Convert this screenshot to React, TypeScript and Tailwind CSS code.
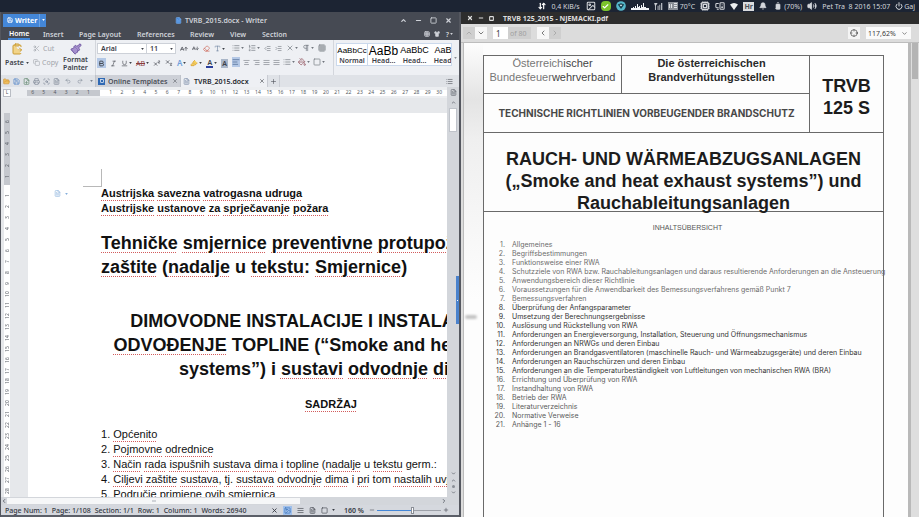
import type { ReactNode } from "react";
import {
  AArrowDown,
  AArrowUp,
  AlignCenter,
  AlignJustify,
  AlignLeft,
  AlignRight,
  ArrowDownUp,
  Battery,
  Bell,
  Bold,
  Check,
  ChevronDown,
  ChevronLeft,
  ChevronRight,
  ChevronUp,
  ClipboardPaste,
  Copy,
  Cpu,
  Crosshair,
  Eraser,
  FileDown,
  FileText,
  FolderOpen,
  Grid3x3,
  Highlighter,
  Image,
  IndentDecrease,
  IndentIncrease,
  Italic,
  List,
  ListOrdered,
  Minus,
  MonitorSpeaker,
  PaintBucket,
  Paintbrush,
  Pilcrow,
  Plus,
  Power,
  Printer,
  Redo2,
  Save,
  Scissors,
  ScanSearch,
  Shirt,
  Square,
  Subscript,
  Superscript,
  Type,
  Underline,
  Undo2,
  Volume2,
  X,
} from "lucide-react";

// text between braces gets the spell checker's red underline
function Checked({ text }: { text: string }) {
  return (
    <>
      {text.split(/[{}]/).map((part, i) =>
        i % 2 === 1 ? (
          <span key={i} className="underline decoration-[#d25c5c] decoration-dotted decoration-1 underline-offset-3">
            {part}
          </span>
        ) : (
          part
        )
      )}
    </>
  );
}

function Tool({ label, active, drop, children }: { label: string; active?: boolean; drop?: boolean; children: ReactNode }) {
  return (
    <button
      aria-label={label}
      className={`flex h-[10px] shrink-0 items-center justify-center gap-px ${active ? "bg-[#b4c8e6]" : ""}`}
    >
      {children}
      {drop && <Caret />}
    </button>
  );
}

function Caret() {
  return (
    <svg viewBox="0 0 4 3" className="h-[2px] w-[3px] shrink-0" aria-hidden="true">
      <path d="M0 0h4L2 3z" fill="currentColor" />
    </svg>
  );
}

function SystemBar() {
  return (
    <header className="flex h-3 shrink-0 items-center justify-end gap-[5px] bg-[#1c2433] pr-1 text-[7px] leading-none text-[#d3d6db]">
      <ArrowDownUp size={8} strokeWidth={3.5} className="text-white" />
      <span className="mr-px">0,4 KiB/s</span>
      <Image size={10} strokeWidth={2.5} />
      <span className="flex size-[10px] items-center justify-center rounded-[4px] bg-[#7cc42c] text-white">
        <Check size={7} strokeWidth={4} />
      </span>
      <svg viewBox="0 0 10 10" className="size-[10px]">
        <circle cx="5" cy="5" r="4.8" fill="#56b7cb" />
        <path d="M1.8 3.4 5 2.2l3.2 1.2L5 8z" fill="#123a4a" />
        <path d="M3.5 3.8h3L5 5.5z" fill="#e6f6fa" />
      </svg>
      <svg viewBox="0 0 18 8" className="h-2 w-[18px]">
        <path d="M0 8V6h2V5h1v1h1V4h1v2h1V2h1v3h1V4h1v2h1V3h1v2h1V1h1v4h2v1h3v2z" fill="#f1f3f5" />
      </svg>
      <svg viewBox="0 0 10 8" className="h-[7px] w-[9px]">
        <path d="M0 0h4L2 3v5H1V3zM4 3h1v5H4zM6 2h1v6H6zM8 0h1.3v8H8z" fill="#c8ccd2" />
      </svg>
      <span className="flex items-center gap-[2px]">
        <svg viewBox="0 0 10 8" className="h-2 w-[10px]">
          <path d="M0 0h10v8H0z" fill="#8b9097" />
          <path d="M1 2h1v4H1zM3 2h1v4H3zM6 1h3v1H6zM6 3h3v1H6zM6 5h3v1H6z" fill="#e2e4e7" />
        </svg>
        70°C
      </span>
      <Cpu size={10} strokeWidth={3} />
      <MonitorSpeaker size={10} strokeWidth={2.5} />
      <svg viewBox="0 0 8 7" className="h-[7px] w-2">
        <path d="M0 1.5Q4-1.5 8 1.5L4 7z" fill="#eceef0" />
      </svg>
      <span className="flex h-[9px] w-[11px] items-center justify-center bg-[#d9dbde] font-bold text-[#4b5058]">Hr</span>
      <Bell size={8} fill="currentColor" />
      <span className="ml-[2px] flex items-center gap-[2px]">
        <Battery size={8} className="-rotate-90" fill="currentColor" />
        (70%)
      </span>
      <Volume2 size={10} fill="currentColor" />
      <time>Pet Tra&nbsp; 8 2016 15:07</time>
      <span className="flex items-center gap-px">
        <Power size={8} strokeWidth={3} />
        Gaj
      </span>
    </header>
  );
}

const menu = [
  { name: "Home", width: "w-[35px]" },
  { name: "Insert", width: "w-9" },
  { name: "Page Layout", width: "w-[58px]" },
  { name: "References", width: "w-[53px]" },
  { name: "Review", width: "w-10" },
  { name: "View", width: "w-8" },
  { name: "Section", width: "w-8" },
];

function WriterHeader() {
  return (
    <div className="shrink-0 bg-[#464a53] text-[7px] leading-none font-semibold text-[#cfd2d8]">
      <div className="flex h-4 items-center pl-[2px]">
        <button className="flex h-[13px] w-[43px] items-center bg-[#4487d8] pl-1 font-bold text-white">
          <Save size={6} strokeWidth={3} />
          <span className="ml-[2px] flex-1 text-left">Writer</span>
          <span className="flex h-full w-[7px] items-center justify-center border-l border-[#6aa2e4]">
            <Caret />
          </span>
        </button>
        <h1 className="flex flex-1 items-center justify-center gap-[3px] pr-1">
          <FileText size={7} className="text-[#7fb2ee]" fill="#4487d8" />
          TVRB_2015.docx - Writer
        </h1>
        <div className="flex gap-2 pr-[7px]">
          <button aria-label="Roll up"><ChevronUp size={7} strokeWidth={4} /></button>
          <button aria-label="Minimise"><Minus size={7} strokeWidth={4} /></button>
          <button aria-label="Maximise"><Square size={7} strokeWidth={3} /></button>
          <button aria-label="Close"><X size={7} strokeWidth={4} /></button>
        </div>
      </div>
      <nav className="flex h-3 items-stretch pl-[7px]">
        {menu.map((m, i) => (
          <div key={m.name} className={`shrink-0 ${m.width}`}>
            <button
              className={`h-full whitespace-nowrap ${i === 0 ? "border-b-2 border-[#4487d8] px-px text-white" : ""}`}
            >
              {m.name}
            </button>
          </div>
        ))}
        <div className="ml-auto flex items-center gap-1 pr-[6px]">
          <Grid3x3 size={6} strokeWidth={3} />
          <Shirt size={6} fill="currentColor" />
          <button className="flex items-center gap-px pl-[2px]">? <Caret /></button>
        </div>
      </nav>
    </div>
  );
}

const styles = [
  { sample: "AaBbCc", name: "Normal", size: "text-[8px]" },
  { sample: "AaBb", name: "Head...", size: "text-[12px]" },
  { sample: "AaBbC", name: "Head...", size: "text-[9px]" },
  { sample: "AaBb", name: "Head...", size: "text-[9px]" },
];

function Ribbon() {
  return (
    <div className="flex h-[35px] shrink-0 overflow-hidden bg-[#eef0f4] pl-[3px] text-[7px] leading-none font-semibold text-[#3c4048]">
      <button className="flex w-[26px] flex-col items-center gap-1 pt-[3px]">
        <ClipboardPaste size={12} className="text-[#c99b34]" fill="#f2d489" />
        <span className="flex items-center gap-[2px]">Paste <Caret /></span>
      </button>
      <div className="flex w-[31px] flex-col gap-1 pt-[3px] pl-[3px] font-normal text-[#a0a4aa]">
        <button className="flex h-[10px] items-center gap-[3px]"><Scissors size={7} /> Cut</button>
        <button className="flex h-[10px] items-center gap-[2px]"><Copy size={7} /> Copy</button>
      </div>
      <button className="flex w-[29px] flex-col items-center gap-px pt-[3px]">
        <Paintbrush size={12} className="text-[#6d55a0]" fill="#a58fce" />
        <span className="leading-[8px]">Format Painter</span>
      </button>
      <div className="ml-[5px] flex w-[136px] shrink-0 flex-col gap-1 border-l border-[#d3d6dc] pt-[3px] pl-px">
        <div className="flex items-center gap-1">
          <div className="flex h-[11px] w-[79px] border border-[#cdd1d8] bg-white">
            <label className="flex w-[49px] items-center border-r border-[#cdd1d8] pr-[2px]">
              <select aria-label="Font name" className="w-full appearance-none pl-[3px] font-semibold outline-none">
                <option>Arial</option>
              </select>
              <Caret />
            </label>
            <label className="flex flex-1 items-center pr-[2px]">
              <select aria-label="Font size" className="w-full appearance-none pl-[3px] font-semibold outline-none">
                <option>11</option>
              </select>
              <Caret />
            </label>
          </div>
          <Tool label="Grow font"><AArrowUp size={8} /></Tool>
          <Tool label="Shrink font"><AArrowDown size={7} /></Tool>
          <Tool label="Clear formatting"><Eraser size={7} className="text-[#c8503c]" /></Tool>
          <Tool label="Change case" drop><Type size={7} className="text-[#6a7f9c]" /></Tool>
        </div>
        <div className="flex items-center gap-1">
          <Tool label="Bold" active><Bold size={9} strokeWidth={3} className="px-px" /></Tool>
          <Tool label="Italic"><Italic size={7} /></Tool>
          <Tool label="Underline" drop><Underline size={7} /></Tool>
          <Tool label="Strikethrough" drop><s className="font-normal text-[#8a3c3c]">AB</s></Tool>
          <Tool label="Superscript"><Superscript size={8} /></Tool>
          <Tool label="Subscript"><Subscript size={8} /></Tool>
          <Tool label="Text effects" drop><span className="text-[8px] text-[#6d9edb]">A</span></Tool>
          <Tool label="Highlight" drop><Highlighter size={8} className="text-[#d69a28]" fill="#f3cc5a" /></Tool>
          <Tool label="Font colour" drop><span className="border-b-2 border-[#2a3f9c] px-px">A</span></Tool>
          <Tool label="Shading"><span className="bg-[#a9b6c8] p-px">A</span></Tool>
        </div>
      </div>
      <div className="flex w-[103px] shrink-0 flex-col gap-1 border-r border-[#d3d6dc] pt-[3px] pl-px text-[#70757d]">
        <div className="flex items-center gap-1">
          <Tool label="Bullets" drop><List size={8} /></Tool>
          <Tool label="Numbering" drop><ListOrdered size={8} /></Tool>
          <Tool label="Decrease indent"><IndentDecrease size={7} /></Tool>
          <Tool label="Increase indent"><IndentIncrease size={7} /></Tool>
          <Tool label="Character scale" drop><X size={8} /></Tool>
          <Tool label="Paragraph marks" drop><Pilcrow size={8} /></Tool>
          <Tool label="Grid"><Grid3x3 size={8} /></Tool>
        </div>
        <div className="flex items-center gap-[3px]">
          <Tool label="Align left" active><AlignLeft size={8} className="text-[#46628c]" /></Tool>
          <Tool label="Centre"><AlignCenter size={7} /></Tool>
          <Tool label="Align right"><AlignRight size={7} /></Tool>
          <Tool label="Justify"><AlignJustify size={7} /></Tool>
          <Tool label="Distribute"><AlignJustify size={7} /></Tool>
          <Tool label="Line spacing" drop><List size={8} /></Tool>
          <Tool label="Fill" drop><PaintBucket size={8} className="text-[#8a4450]" /></Tool>
          <Tool label="Borders" drop><Square size={8} /></Tool>
        </div>
      </div>
      <div className="mt-[3px] ml-[2px] flex h-[23px] min-w-0 flex-1 overflow-hidden border border-[#cbd9ec] bg-white">
        {styles.map((s, i) => (
          <button
            key={i}
            className={`flex w-[31px] shrink-0 flex-col items-center justify-end overflow-hidden pb-px ${i === 0 ? "border-r border-[#cbd9ec]" : ""}`}
          >
            <span className={`flex h-[13px] items-center font-['Liberation_Sans',sans-serif] font-normal text-black ${s.size}`}>
              {s.sample}
            </span>
            {s.name}
          </button>
        ))}
      </div>
      <div className="flex w-[7px] items-center justify-center text-[#8a8e96]"><Caret /></div>
    </div>
  );
}

function DocumentTabs() {
  return (
    <div className="flex h-3 shrink-0 items-center bg-[#dfe2e7] text-[7px] leading-none font-semibold text-[#4a4e57]">
      <div className="flex w-[94px] shrink-0 items-center gap-[3px] pl-[2px] text-[#76808f]">
        <button aria-label="Open"><FolderOpen size={7} className="text-[#cf9132]" fill="#efbf5e" /></button>
        <button aria-label="Save"><Save size={7} className="text-[#3f78c4]" /></button>
        <button aria-label="Export"><FileDown size={7} className="text-[#4d7a5b]" /></button>
        <button aria-label="Print"><Printer size={7} /></button>
        <button aria-label="Print preview"><ScanSearch size={7} /></button>
        <button aria-label="Find"><FileText size={7} /></button>
        <button aria-label="Undo" className="pl-[2px]"><Undo2 size={6} /></button>
        <button aria-label="Redo" className="pl-[3px]"><Redo2 size={6} /></button>
        <span className="pl-1"><Caret /></span>
      </div>
      <div className="flex h-full w-[86px] items-center gap-[3px] border-x border-[#bfc3ca] bg-[#cdd0d7] px-[2px]">
        <span className="flex size-[7px] items-center justify-center bg-[#2f69b4] text-white"><Square size={4} strokeWidth={4} /></span>
        <span className="flex-1 whitespace-nowrap">Online Templates</span>
        <X size={6} />
      </div>
      <div className="flex h-full w-[86px] items-center gap-1 bg-[#eef0f4] px-[2px] text-[#23262c]">
        <FileText size={7} className="text-[#6d7f9e]" />
        <span className="flex-1 whitespace-nowrap">TVRB_2015.docx</span>
        <X size={6} />
      </div>
      <button aria-label="New tab" className="flex h-full w-[13px] items-center justify-center border-x border-[#c9ccd3]">
        <Plus size={7} />
      </button>
      <List size={7} className="mr-[6px] ml-auto" />
    </div>
  );
}

const before = [6, 5, 4, 3, 2, 1];
const across = Array.from({ length: 30 }, (_, i) => i + 1);
const down = across.slice(0, 28);

function Ruler() {
  return (
    <div className="flex h-[11px] shrink-0 items-center bg-[#eceef1] pl-[2px] text-[5px] leading-none text-[#555a62]">
      <div className="flex size-2 shrink-0 items-center justify-center border border-[#b9bdc4] bg-white">L</div>
      <div className="ml-4 flex h-[6px] w-[73px] shrink-0 items-center bg-[#c5c8ce] pr-[6px]">
        {before.map((n) => (
          <span key={n} className="flex-1 text-center">{n}</span>
        ))}
      </div>
      <div className="flex h-[6px] min-w-0 flex-1 items-center bg-white pr-[2px] pl-[5px]">
        {across.map((n) => (
          <span key={n} className="w-0 flex-1 text-center">{n}</span>
        ))}
      </div>
      <div className="flex h-full w-3 items-center justify-center bg-[#d3d6db]">
        <FileText size={7} />
      </div>
    </div>
  );
}

function VerticalRuler() {
  return (
    <div className="mt-[15px] ml-[3px] flex w-[6px] shrink-0 flex-col bg-white text-[5px] leading-[6px] text-[#555a62]">
      <div className="flex h-[72px] shrink-0 flex-col bg-[#c5c8ce] pt-[3px]">
        {before.map((n) => (
          <span key={n} className="h-[11px] rotate-180 text-center [writing-mode:vertical-rl]">{n}</span>
        ))}
      </div>
      <div className="flex min-h-0 flex-1 flex-col pt-[5px]">
        {down.map((n) => (
          <span key={n} className="min-h-0 flex-1 rotate-180 text-center [writing-mode:vertical-rl]">{n}</span>
        ))}
      </div>
    </div>
  );
}

const items = [
  "{Općenito}",
  "{Pojmovne} {odrednice}",
  "{Način} {rada} {ispušnih} {sustava} {dima} i {topline} ({nadalje} u {tekstu} germ.: ",
  "{Ciljevi} {zaštite} {sustava}, {tj}. {sustava} {odvodnje} {dima} i {pri} tom {nastalih} {uvjeta}",
  "{Područje} {primjene} {ovih} {smjernica}",
];

function DocumentPage() {
  return (
    <article className="relative mt-[15px] ml-[18px] w-[606px] shrink-0 bg-white px-[73px] pt-[73px] font-['Liberation_Sans',Arial,sans-serif] text-[11px] leading-[15px] text-[#111]">
      <div className="absolute top-14 left-[55px] h-[18px] w-[19px] border-r border-b border-[#b8b8b8]" />
      <div className="absolute top-[77px] left-[26px] flex items-center gap-1 text-[#84aedb]">
        <FileText size={7} /> <Caret />
      </div>
      <p className="font-bold whitespace-nowrap"><Checked text="{Austrijska} {savezna} {vatrogasna} {udruga}" /></p>
      <p className="font-bold whitespace-nowrap"><Checked text="{Austrijske} {ustanove} {za} {sprječavanje} {požara}" /></p>
      <h2 className="mt-[15px] text-[18px] leading-6 font-bold whitespace-nowrap">
        <Checked text="{Tehničke} {smjernice} {preventivne} {protupožarne}" />
        <br />
        <Checked text="{zaštite} ({nadalje} u {tekstu}: {Smjernice})" />
      </h2>
      <h2 className="mt-[30px] pr-2 text-center text-[18px] leading-6 font-bold whitespace-nowrap">
        DIMOVODNE INSTALACIJE I INSTALACIJE ZA
        <br />
        <Checked text="{ODVOĐENJE} TOPLINE (“Smoke and heat exhaust" />
        <br />
        <Checked text="systems”) i {sustavi} {odvodnje} {dima}" />
      </h2>
      <p className="mt-4 text-center font-bold"><Checked text="{SADRŽAJ}" /></p>
      <ol className="mt-[15px] whitespace-nowrap">
        {items.map((text, i) => (
          <li key={i}>
            {i + 1}. <Checked text={text} />
          </li>
        ))}
      </ol>
    </article>
  );
}

function StatusBar() {
  return (
    <footer className="flex h-3 shrink-0 items-center gap-1 border-b-2 border-[#5b5f68] bg-[#d5d8de] pr-[10px] pl-1 text-[7px] leading-none font-medium whitespace-nowrap text-[#33373f]">
      <span>Page Num: 1</span>
      <span>Page: 1/108</span>
      <span>Section: 1/1</span>
      <span>Row: 1</span>
      <span>Column: 1</span>
      <span>Words: 26940</span>
      <div className="ml-auto flex items-center gap-[5px]">
        <button aria-label="Full screen"><X size={7} strokeWidth={3} /></button>
        <button aria-label="Page view" className="bg-[#9fc0ec] p-px text-[#2f69b4]"><Image size={7} /></button>
        <button aria-label="Outline"><AlignJustify size={7} /></button>
        <button aria-label="Web layout"><FileText size={7} /></button>
        <button aria-label="Reading" className="flex items-center gap-1"><Square size={7} /> <Caret /></button>
        <span className="pl-1 font-semibold">160 %</span>
        <div className="flex items-center gap-[2px]">
          <Minus size={6} />
          <input
            type="range"
            aria-label="Zoom"
            min={0}
            max={100}
            defaultValue={56}
            className="h-2 w-[64px] appearance-none bg-transparent [&::-webkit-slider-runnable-track]:h-px [&::-webkit-slider-runnable-track]:bg-linear-to-r [&::-webkit-slider-runnable-track]:from-[#4487d8] [&::-webkit-slider-runnable-track]:from-55% [&::-webkit-slider-runnable-track]:to-[#9da1a9] [&::-webkit-slider-runnable-track]:to-55% [&::-webkit-slider-thumb]:-mt-[3px] [&::-webkit-slider-thumb]:h-[7px] [&::-webkit-slider-thumb]:w-[3px] [&::-webkit-slider-thumb]:appearance-none [&::-webkit-slider-thumb]:border [&::-webkit-slider-thumb]:border-[#8a8e96] [&::-webkit-slider-thumb]:bg-white"
          />
          <Plus size={6} />
        </div>
      </div>
    </footer>
  );
}

function WriterWindow() {
  return (
    <section className="flex min-w-0 flex-1 flex-col border-x border-r-2 border-[#54575f] font-['Noto_Sans',sans-serif]">
      <WriterHeader />
      <Ribbon />
      <DocumentTabs />
      <Ruler />
      <div className="flex min-h-0 flex-1 bg-[#e6e8eb]">
        <div className="flex min-w-0 flex-1 overflow-hidden">
          <VerticalRuler />
          <DocumentPage />
        </div>
        <div className="relative flex w-3 shrink-0 flex-col items-center justify-between bg-[#d3d6db] py-[2px] text-[#6b7078]">
          <div className="flex flex-col items-center gap-[3px]">
            <ChevronUp size={5} strokeWidth={4} />
            <div className="h-6 w-2 border border-[#bfc3ca] bg-white" />
          </div>
          <div className="flex flex-col items-center gap-[2px]">
            <ChevronDown size={5} strokeWidth={4} />
            <ChevronUp size={5} strokeWidth={4} />
            <span className="size-[3px] rounded-full bg-[#8a8e96]" />
            <ChevronDown size={5} strokeWidth={4} />
          </div>
          <div className="absolute top-[178px] right-0 flex h-12 w-[3px] items-center justify-center bg-[#4a82cc]">
            <span className="size-px bg-white" />
          </div>
        </div>
      </div>
      <div className="flex h-2 shrink-0 items-center bg-[#d3d6db] pr-3 text-[#6b7078]">
        <ChevronLeft size={6} strokeWidth={4} />
        <div className="flex h-[6px] w-[293px] items-center justify-center bg-[#f6f7f8]">
          <span className="h-[2px] w-1 bg-[#d0d3d8]" />
        </div>
        <ChevronRight size={6} strokeWidth={4} className="ml-auto" />
      </div>
      <StatusBar />
    </section>
  );
}

const contents = [
  "Allgemeines",
  "Begriffsbestimmungen",
  "Funktionsweise einer RWA",
  "Schutzziele von RWA bzw. Rauchableitungsanlagen und daraus resultierende Anforderungen an die Ansteuerung",
  "Anwendungsbereich dieser Richtlinie",
  "Voraussetzungen für die Anwendbarkeit des Bemessungsverfahrens gemäß Punkt 7",
  "Bemessungsverfahren",
  "Überprüfung der Anfangsparameter",
  "Umsetzung der Berechnungsergebnisse",
  "Auslösung und Rückstellung von RWA",
  "Anforderungen an Energieversorgung, Installation, Steuerung und Öffnungsmechanismus",
  "Anforderungen an NRWGs und deren Einbau",
  "Anforderungen an Brandgasventilatoren (maschinelle Rauch- und Wärmeabzugsgeräte) und deren Einbau",
  "Anforderungen an Rauchschürzen und deren Einbau",
  "Anforderungen an die Temperaturbeständigkeit von Luftleitungen von mechanischen RWA (BRA)",
  "Errichtung und Überprüfung von RWA",
  "Instandhaltung von RWA",
  "Betrieb der RWA",
  "Literaturverzeichnis",
  "Normative Verweise",
  "Anhänge 1 - 16",
];

// the scan is faint at the top and bottom of the list
function inkColor(i: number) {
  if (i < 7) return "text-[#6c6c6c]";
  if (i < 15) return "text-[#333]";
  return "text-[#5a5a5a]";
}

function ScannedPage() {
  return (
    <div className="flex min-w-0 flex-1 bg-[#fdfdfd] font-['Liberation_Sans',Arial,sans-serif] text-[#2a2a2a]">
      <div className="flex w-5 shrink-0 flex-col border-l border-[#bbb]">
        <div className="h-14 bg-linear-to-t from-[#e4e4e4] to-[#fdfdfd]" />
        <div className="h-10 bg-linear-to-b from-[#e4e4e4] to-[#efefef]" />
        <div className="h-40 bg-linear-to-b from-[#efefef] to-[#fdfdfd]" />
        <div className="mt-4 ml-px h-1 w-3 rounded-full bg-[#c4c4c4] blur-[1px]" />
      </div>
      <div className="mt-3 flex min-w-0 flex-1 flex-col border-x border-t border-[#6a6a6a]">
        <div className="flex border-b border-[#6a6a6a]">
          <div className="flex min-w-0 flex-1 flex-col">
            <div className="flex h-[38px] border-b border-[#6a6a6a] text-center text-[11px] leading-[14px]">
              <p className="w-[138px] shrink-0 border-r border-[#6a6a6a] text-[#444]">
                <span className="text-[#777]">Österreich</span>ischer
                <br />
                <span className="text-[#777]">Bundesfeuer</span>wehrverband
              </p>
              <p className="flex-1 pr-2 font-bold">
                Die österreichischen
                <br />
                Brandverhütungsstellen
              </p>
            </div>
            <p className="flex h-[38px] items-center justify-center font-['Inter','Liberation_Sans',sans-serif] text-[10px] font-bold whitespace-nowrap text-[#484848]">
              TECHNISCHE RICHTLINIEN VORBEUGENDER BRANDSCHUTZ
            </p>
          </div>
          <p className="w-[74px] shrink-0 border-l border-[#6a6a6a] pt-[19px] text-center text-[18px] leading-[22px] font-bold text-[#1c1c1c]">
            TRVB
            <br />
            125 S
          </p>
        </div>
        <h2 className="h-[79px] shrink-0 border-b border-[#6a6a6a] pt-[15px] text-center text-[18px] leading-[22px] font-bold whitespace-nowrap text-[#1c1c1c]">
          RAUCH- UND WÄRMEABZUGSANLAGEN
          <br />
          („Smoke and heat exhaust systems”) und
          <br />
          Rauchableitungsanlagen
        </h2>
        <h3 className="pt-[11px] pl-2 text-center text-[7px] leading-[9px] text-[#555]">INHALTSÜBERSICHT</h3>
        <ol className="mt-2 pl-[9px] font-['Inter','Liberation_Sans',sans-serif] text-[7px] leading-[9px] whitespace-nowrap">
          {contents.map((text, i) => (
            <li key={i} className={`flex ${inkColor(i)}`}>
              <span className="w-3 shrink-0 text-right">{i + 1}.</span>
              <span className="ml-[7px]">{text}</span>
            </li>
          ))}
        </ol>
      </div>
      <div className="w-6 shrink-0" />
    </div>
  );
}

function ViewerWindow() {
  return (
    <section className="flex min-w-0 flex-1 flex-col bg-[#dcdcdc] font-['Noto_Sans',sans-serif] text-[7px] leading-none">
      <div className="flex h-3 shrink-0 items-center gap-[5px] bg-[#2d2d2d] pl-[6px] text-[#dedede]">
        <button aria-label="Close"><X size={6} strokeWidth={5} /></button>
        <button aria-label="Minimise"><Minus size={6} strokeWidth={4} /></button>
        <button aria-label="Maximise"><Square size={5} strokeWidth={5} /></button>
        <h1 className="pl-1 font-bold">TRVB 125_2015 - NJEMACKI.pdf</h1>
      </div>
      <div className="flex h-[18px] shrink-0 items-center pr-2 pl-[2px] text-[#3c3c3c]">
        <button aria-label="Previous page" className="flex h-3 w-3 items-center justify-center bg-[#cfcfcf] text-[#9a9a9a]"><ChevronUp size={8} /></button>
        <button aria-label="Next page" className="flex h-3 w-3 items-center justify-center bg-[#f7f7f7]"><ChevronDown size={8} /></button>
        <label className="ml-[6px] flex h-3 w-[38px] items-center bg-[#cfcfcf] text-[#a0a0a0]">
          <input aria-label="Page" defaultValue="1" className="h-full w-[15px] bg-white pl-[3px] text-[8px] text-[#3c3c3c] outline-none" />
          <span className="pl-[2px]">of 80</span>
        </label>
        <button aria-label="Back" className="ml-[6px] flex h-3 w-3 items-center justify-center bg-[#f7f7f7]"><ChevronLeft size={8} /></button>
        <button aria-label="Forward" className="flex h-3 w-3 items-center justify-center bg-[#cfcfcf] text-[#9a9a9a]"><ChevronRight size={8} /></button>
        <button aria-label="Fit" className="ml-auto flex size-3 items-center justify-center bg-[#f4f4f4]"><Crosshair size={8} /></button>
        <label className="ml-[6px] flex h-3 w-[45px] items-center bg-[#fafafa] pr-[3px]">
          <select aria-label="Zoom level" className="w-full appearance-none pl-[2px] outline-none">
            <option>117,62%</option>
          </select>
          <ChevronDown size={7} className="shrink-0" />
        </label>
      </div>
      <div className="flex min-h-0 flex-1 overflow-hidden border-t border-[#bdbdbd] pl-[2px]">
        <ScannedPage />
        <div className="w-[3px] shrink-0 bg-[#b9b9b9]" />
        <div className="w-2 shrink-0 bg-[#dedede]">
          <div className="ml-px h-9 w-[6px] bg-[#b4b4b4]" />
        </div>
      </div>
    </section>
  );
}

export default function App() {
  return (
    <div className="flex h-screen flex-col overflow-hidden bg-[#1c2433] font-['Noto_Sans',sans-serif]">
      <SystemBar />
      <main className="flex min-h-0 flex-1">
        <WriterWindow />
        <ViewerWindow />
      </main>
    </div>
  );
}
